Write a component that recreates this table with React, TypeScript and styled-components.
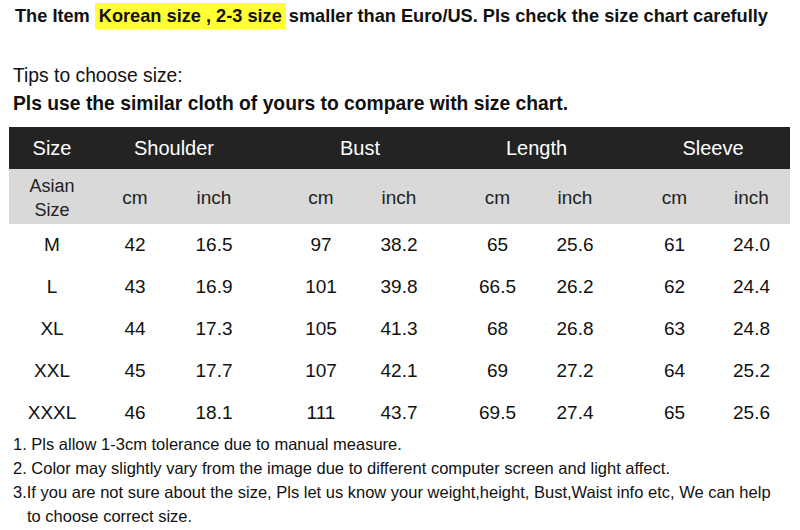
import React from "react";
import styled, { createGlobalStyle } from "styled-components";

const Global = createGlobalStyle`
  *, *::before, *::after { box-sizing: border-box; }
  html, body { margin: 0; padding: 0; background: #fff; }
  body { font-family: "Liberation Sans", Arial, sans-serif; color: #111; }
`;

const Page = styled.div`
  width: 800px;
  height: 530px;
  overflow: hidden;
  display: flex;
  flex-direction: column;
`;

const Title = styled.div`
  margin: 3px 0 0 15px;
  font-size: 18.2px;
  font-weight: bold;
  line-height: 26px;
  height: 26px;
  white-space: nowrap;
  display: flex;
  align-items: center;
`;

const Mark = styled.span`
  display: inline-block;
  background: #ffff33;
  height: 26px;
  line-height: 26px;
  padding: 0 4px;
  margin: 0 3px 0 5px;
`;

const Tips = styled.div`
  margin: 33px 0 0 13px;
  display: flex;
  flex-direction: column;
  font-size: 19.3px;
  line-height: 28px;
`;

const TipLine = styled.div<{ $bold?: boolean }>`
  font-weight: ${(p) => (p.$bold ? "bold" : "normal")};
  white-space: nowrap;
`;

const Table = styled.div`
  margin: 9px 0 0 9px;
  width: 781px;
  display: grid;
  grid-template-columns: 86px 80px 78px 107px 78px 98px 78px 99px 77px;
`;

const HeadCell = styled.div<{ $span?: number; $pad?: number }>`
  grid-column: span ${(p) => p.$span ?? 1};
  background: #232323;
  color: #fff;
  font-size: 20px;
  height: 42px;
  display: flex;
  align-items: center;
  justify-content: center;
  padding-left: ${(p) => p.$pad ?? 0}px;
`;

const UnitCell = styled.div<{ $pad?: number }>`
  background: #d9d9d9;
  color: #222;
  font-size: 19px;
  height: 55px;
  display: flex;
  align-items: center;
  justify-content: center;
  text-align: center;
  line-height: 24px;
  padding-top: 3px;
  padding-left: ${(p) => p.$pad ?? 0}px;
`;

const AsianCell = styled(UnitCell)`
  font-size: 18px;
  padding-top: 2px;
`;

const DataCell = styled.div<{ $pad?: number }>`
  color: #111;
  font-size: 19px;
  height: 42px;
  display: flex;
  align-items: center;
  justify-content: center;
  padding-left: ${(p) => p.$pad ?? 0}px;
`;

const Notes = styled.div`
  margin: -2px 0 0 13px;
  font-family: "Liberation Sans", Arial, sans-serif;
  font-size: 16.5px;
  line-height: 24px;
  color: #111;
`;

const NoteLine = styled.div<{ $indent?: boolean }>`
  white-space: nowrap;
  padding-left: ${(p) => (p.$indent ? 14 : 0)}px;
`;

const pads = [0, 0, 0, 29, 0, 21, 0, 22, 0];

const rows: string[][] = [
  ["M", "42", "16.5", "97", "38.2", "65", "25.6", "61", "24.0"],
  ["L", "43", "16.9", "101", "39.8", "66.5", "26.2", "62", "24.4"],
  ["XL", "44", "17.3", "105", "41.3", "68", "26.8", "63", "24.8"],
  ["XXL", "45", "17.7", "107", "42.1", "69", "27.2", "64", "25.2"],
  ["XXXL", "46", "18.1", "111", "43.7", "69.5", "27.4", "65", "25.6"],
];

const units = ["cm", "inch", "cm", "inch", "cm", "inch", "cm", "inch"];

export default function App() {
  return (
    <Page>
      <Global />
      <Title>
        The Item<Mark>Korean size , 2-3 size</Mark>smaller than Euro/US. Pls check the size chart carefully
      </Title>
      <Tips>
        <TipLine>Tips to choose size:</TipLine>
        <TipLine $bold>Pls use the similar cloth of yours to compare with size chart.</TipLine>
      </Tips>
      <Table>
        <HeadCell>Size</HeadCell>
        <HeadCell $span={2}>Shoulder</HeadCell>
        <HeadCell $span={2} $pad={29}>Bust</HeadCell>
        <HeadCell $span={2} $pad={21}>Length</HeadCell>
        <HeadCell $span={2} $pad={22}>Sleeve</HeadCell>
        <AsianCell>
          Asian
          <br />
          Size
        </AsianCell>
        {units.map((u, i) => (
          <UnitCell key={i} $pad={pads[i + 1]}>
            {u}
          </UnitCell>
        ))}
        {rows.map((r, ri) =>
          r.map((v, ci) => (
            <DataCell key={`${ri}-${ci}`} $pad={pads[ci]}>
              {v}
            </DataCell>
          ))
        )}
      </Table>
      <Notes>
        <NoteLine>1. Pls allow 1-3cm tolerance due to manual measure.</NoteLine>
        <NoteLine>2. Color may slightly vary from the image due to different computer screen and light affect.</NoteLine>
        <NoteLine>
          3.If you are not sure about the size, Pls let us know your weight,height, Bust,Waist info etc, We can help
        </NoteLine>
        <NoteLine $indent>to choose correct size.</NoteLine>
      </Notes>
    </Page>
  );
}
